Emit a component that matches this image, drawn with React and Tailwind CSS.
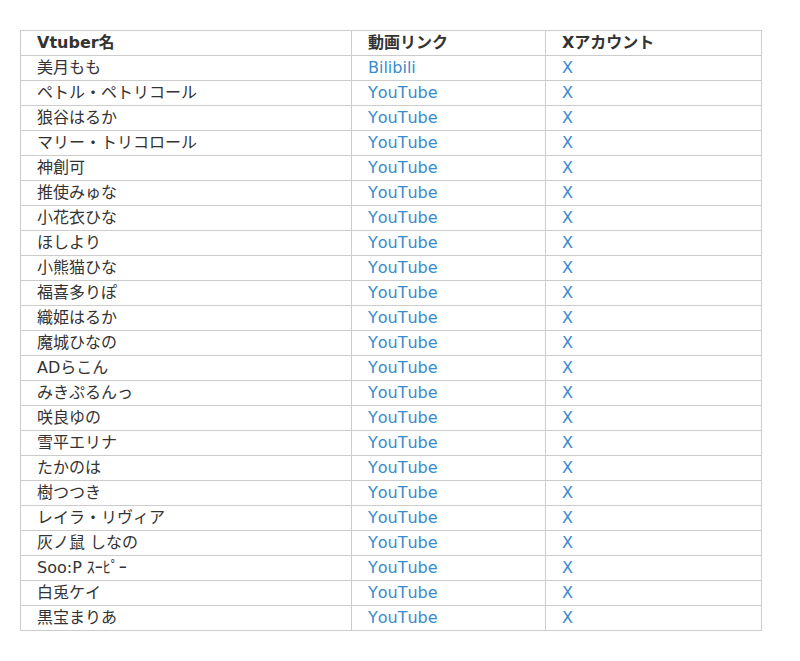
import React from 'react'

const rows = [
  ['美月もも', 'Bilibili'],
  ['ペトル・ペトリコール', 'YouTube'],
  ['狼谷はるか', 'YouTube'],
  ['マリー・トリコロール', 'YouTube'],
  ['神創可', 'YouTube'],
  ['推使みゅな', 'YouTube'],
  ['小花衣ひな', 'YouTube'],
  ['ほしより', 'YouTube'],
  ['小熊猫ひな', 'YouTube'],
  ['福喜多りぽ', 'YouTube'],
  ['織姫はるか', 'YouTube'],
  ['魔城ひなの', 'YouTube'],
  ['ADらこん', 'YouTube'],
  ['みきぷるんっ', 'YouTube'],
  ['咲良ゆの', 'YouTube'],
  ['雪平エリナ', 'YouTube'],
  ['たかのは', 'YouTube'],
  ['樹つつき', 'YouTube'],
  ['レイラ・リヴィア', 'YouTube'],
  ['灰ノ鼠 しなの', 'YouTube'],
  ['Soo:P ｽｰﾋﾟｰ', 'YouTube'],
  ['白兎ケイ', 'YouTube'],
  ['黒宝まりあ', 'YouTube'],
]

const cell = 'border border-[#cccccc] h-[25px] px-4 py-0 text-left align-middle'

export default function App() {
  return (
    <div
      className="bg-white min-h-[661px] pt-[30px] pl-[20px] text-[16px] leading-[24px] text-[#333333] [font-kerning:none]"
      style={{ fontFamily: '"DejaVu Sans", "Noto Sans CJK JP", sans-serif' }}
    >
      <table className="border-collapse w-[741px] table-fixed">
        <colgroup>
          <col className="w-[331px]" />
          <col className="w-[194px]" />
          <col className="w-[216px]" />
        </colgroup>
        <thead>
          <tr>
            <th className={cell + ' font-bold'}>Vtuber名</th>
            <th className={cell + ' font-bold'}>動画リンク</th>
            <th className={cell + ' font-bold'}>Xアカウント</th>
          </tr>
        </thead>
        <tbody>
          {rows.map(([name, site]) => (
            <tr key={name}>
              <td className={cell}>{name}</td>
              <td className={cell}>
                <a href="#" className="text-[#3a8bcb]">{site}</a>
              </td>
              <td className={cell}>
                <a href="#" className="text-[#3a8bcb]">X</a>
              </td>
            </tr>
          ))}
        </tbody>
      </table>
    </div>
  )
}
